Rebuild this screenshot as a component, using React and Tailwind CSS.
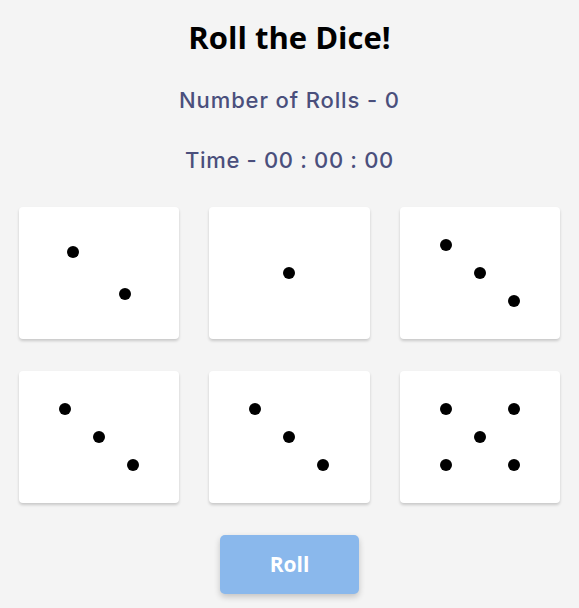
import React, { useState } from 'react'

// pip cells per face: [col, row] in a 3x3 grid (1-based)
const faces = [
  { kind: 'two' },
  { kind: 'grid', pips: [[2, 2]] },
  { kind: 'grid', pips: [[1, 1], [2, 2], [3, 3]] },
  { kind: 'grid', pips: [[1, 1], [2, 2], [3, 3]] },
  { kind: 'grid', pips: [[1, 1], [2, 2], [3, 3]] },
  { kind: 'grid', pips: [[1, 1], [3, 1], [2, 2], [1, 3], [3, 3]] },
]

const colStart = ['col-start-1', 'col-start-2', 'col-start-3']
const rowStart = ['row-start-1', 'row-start-2', 'row-start-3']

function Pip() {
  return <span className="block w-3 h-3 rounded-full bg-black" />
}

function Die({ face }) {
  return (
    <div className="bg-white rounded-[4px] h-[132px] shadow-[0_2px_3px_rgba(0,0,0,0.18)] flex items-center justify-center">
      {face.kind === 'two' ? (
        <div className="grid grid-cols-[52px_52px] grid-rows-[42px_42px]">
          <div className="col-start-1 row-start-1 flex items-center justify-center"><Pip /></div>
          <div className="col-start-2 row-start-2 flex items-center justify-center"><Pip /></div>
        </div>
      ) : (
        <div className="grid grid-cols-[34px_34px_34px] grid-rows-[28px_28px_28px]">
          {face.pips.map(([c, r], i) => (
            <div key={i} className={`${colStart[c - 1]} ${rowStart[r - 1]} flex items-center justify-center`}>
              <Pip />
            </div>
          ))}
        </div>
      )}
    </div>
  )
}

export default function App() {
  const [rolls] = useState(0)

  return (
    <div className="min-h-screen bg-[#f4f4f4] flex flex-col items-center font-['Open_Sans',sans-serif]">
      <h1 className="mt-[17px] text-[31px] leading-[40px] font-bold text-black">Roll the Dice!</h1>
      <p className="mt-[28px] font-['Inter',sans-serif] text-[22px] leading-[30px] tracking-[0.04em] font-medium text-[#4a4f7c]">Number of Rolls - {rolls}</p>
      <p className="mt-[30px] font-['Inter',sans-serif] text-[22px] leading-[30px] tracking-[0.03em] font-medium text-[#4a4f7c]">Time - 00 : 00 : 00</p>
      <div className="mt-[32px] w-[541px] grid grid-cols-3 gap-x-[30px] gap-y-8">
        {faces.map((f, i) => (
          <Die key={i} face={f} />
        ))}
      </div>
      <button className="mt-8 w-[139px] h-[59px] rounded-[5px] bg-[#8ab8ec] text-white text-[21px] font-bold shadow-[0_3px_6px_rgba(0,0,0,0.2)]">
        Roll
      </button>
    </div>
  )
}
